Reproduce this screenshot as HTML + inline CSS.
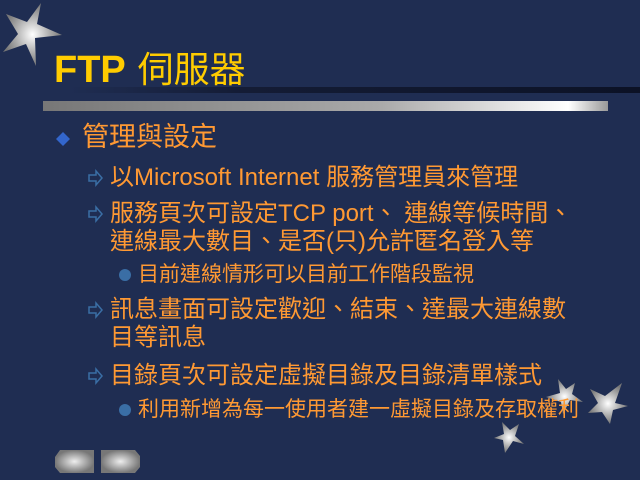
<!DOCTYPE html>
<html><head><meta charset="utf-8"><style>
body{margin:0;width:640px;height:480px;background:#1f2d52;overflow:hidden;position:relative;font-family:"Liberation Sans","Noto Sans CJK TC",sans-serif}
.t{position:absolute;white-space:nowrap;color:#ff9933}
.a{position:absolute}
.m{font-size:24px;line-height:28px}
.s{font-size:21px;line-height:24px}
</style></head><body>
<svg class="a" style="left:0;top:0" width="640" height="480">
<defs>
<radialGradient id="sg"><stop offset="0" stop-color="#fff"/><stop offset="0.6" stop-color="#aaa"/><stop offset="1" stop-color="#777"/></radialGradient>
<linearGradient id="bar" x1="0" x2="1"><stop offset="0" stop-color="#777"/><stop offset="0.6" stop-color="#aaa"/><stop offset="0.93" stop-color="#fff"/><stop offset="1" stop-color="#999"/></linearGradient>
<linearGradient id="dl" x1="0" x2="1"><stop offset="0" stop-color="#1f2d52"/><stop offset="0.3" stop-color="#141c35"/><stop offset="1" stop-color="#0c1226"/></linearGradient>
<radialGradient id="btn"><stop offset="0" stop-color="#eee"/><stop offset="1" stop-color="#777"/></radialGradient>
</defs>
<rect x="70" y="87" width="570" height="6" fill="url(#dl)"/>
<rect x="43" y="101" width="565" height="10" fill="url(#bar)"/>
<polygon points="41,3 37,24 62,35 35,38 36,66 26,44 3,52 18,34 6,14 27,22" fill="url(#sg)"/>
<polygon points="575,383 572,394 583,402 570,400 563,414 561,402 546,397 560,393 558,379 566,389" fill="url(#sg)"/>
<polygon points="622,383 615,403 628,406 613,410 610,424 602,412 588,413 598,403 590,389 605,396" fill="url(#sg)"/>
<polygon points="519,424 515,436 524,444 513,441 505,453 503,440 494,438 504,434 502,422 510,430" fill="url(#sg)"/>
<path d="M60,450 H94 V473 H60 L55,467 V457 Z" fill="url(#btn)"/>
<path d="M101,450 H135 L140,456 V467 L135,473 H101 Z" fill="url(#btn)"/>
<polygon points="63,132 70,139 63,146 56,139" fill="#3366cc"/>
<g fill="none" stroke="#3a6ea5" stroke-width="1.5">
<path d="M89,175 H96 V171 L102,178 L96,185 V181 H89 Z"/>
<path d="M89,211 H96 V207 L102,214 L96,221 V217 H89 Z"/>
<path d="M89,307 H96 V303 L102,310 L96,317 V313 H89 Z"/>
<path d="M89,373 H96 V369 L102,376 L96,383 V379 H89 Z"/>
</g>
<circle cx="125" cy="275" r="6" fill="#3a6ea5"/>
<circle cx="125" cy="410" r="6" fill="#3a6ea5"/>
</svg>
<div class="t" style="left:54px;top:48px;font-size:38px;line-height:44px;color:#ffcc00;font-weight:bold">FTP <span style="font-weight:normal;font-size:36px;margin-left:2px">伺服器</span></div>
<div class="t" style="left:82px;top:122px;font-size:27px;line-height:30px">管理與設定</div>
<div class="t m" style="left:110px;top:164px">以Microsoft Internet 服務管理員來管理</div>
<div class="t m" style="left:110px;top:200px">服務頁次可設定TCP port、 連線等候時間、</div>
<div class="t m" style="left:110px;top:228px">連線最大數目、是否(只)允許匿名登入等</div>
<div class="t s" style="left:138px;top:263px">目前連線情形可以目前工作階段監視</div>
<div class="t m" style="left:110px;top:296px">訊息畫面可設定歡迎、結束、達最大連線數</div>
<div class="t m" style="left:110px;top:324px">目等訊息</div>
<div class="t m" style="left:110px;top:362px">目錄頁次可設定虛擬目錄及目錄清單樣式</div>
<div class="t s" style="left:138px;top:398px">利用新增為每一使用者建一虛擬目錄及存取權利</div>
</body></html>
